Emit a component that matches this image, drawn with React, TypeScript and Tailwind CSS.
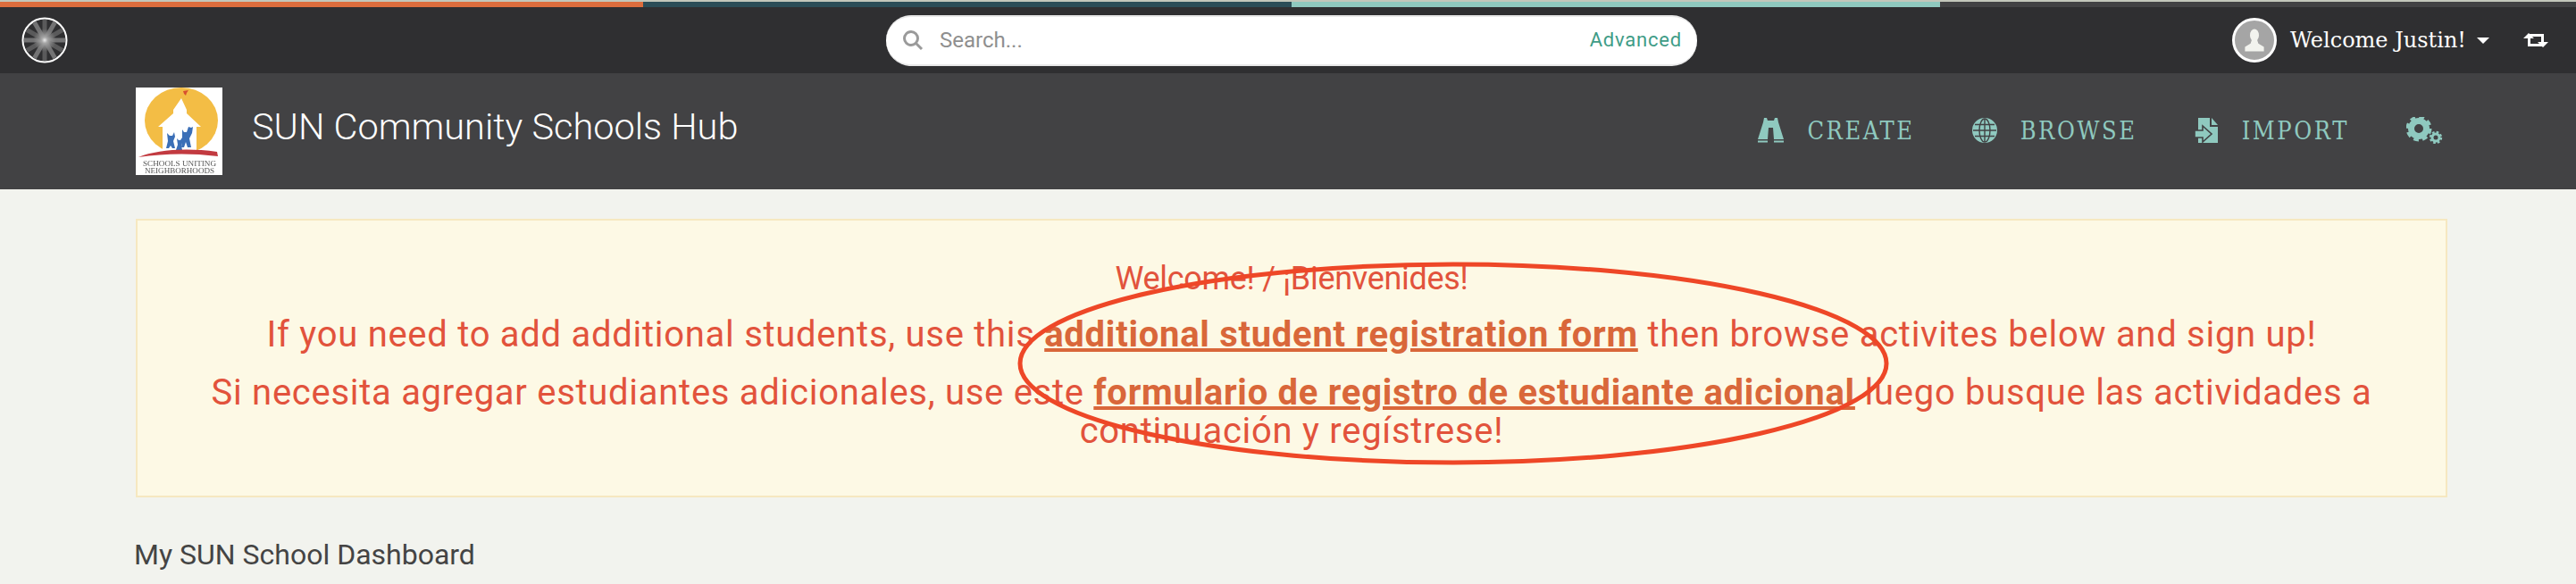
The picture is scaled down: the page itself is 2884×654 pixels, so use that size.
import React from 'react';

const slab = 'font-["DejaVu_Serif","Liberation_Serif",serif]';

const Wheel = () => (
  <svg viewBox="0 0 52 52" className="w-[52px] h-[52px]">
    <defs>
      <radialGradient id="hub">
        <stop offset="0" stopColor="#ececec" />
        <stop offset="0.25" stopColor="#a8a8a8" />
        <stop offset="1" stopColor="#8a8a8a" stopOpacity="0" />
      </radialGradient>
    </defs>
    <circle cx="26" cy="26" r="24.5" fill="#2f2f31" stroke="#fff" strokeWidth="2" />
    {[0, 30, 60, 90, 120, 150].map((a) => (
      <rect key={a} x="23.5" y="3" width="5" height="46" fill={a % 60 === 0 ? '#5a5a5b' : '#737374'} transform={`rotate(${a} 26 26)`} />
    ))}
    <circle cx="26" cy="26" r="13" fill="url(#hub)" />
  </svg>
);

const SunLogo = () => (
  <svg viewBox="0 0 97 98" className="w-[97px] h-[98px] bg-white shrink-0 blur-[0.5px]">
    <ellipse cx="51" cy="37" rx="41" ry="37" fill="#f3bd45" />
    <path d="M51 12l6 13v4l16 15h-5v28H30V44h-5l17-15v-4z" fill="#fff" />
    <path d="M53 4l6-1-2 3-1 3-2-2z" fill="#d8502f" />
    <path d="M52 47l2 3h3l2-6 3 1 2-1-1 7-3 6 2 10h-4l-2-6-2 6h-3l1-10z" fill="#3b6fb7" />
    <path d="M35 51l3 3h3l2-4 1 5-2 5 2 8h-3l-2-3-2 3h-3l2-8z" fill="#3b6fb7" />
    <path d="M46 57l2 2h2l2-3 0 6-1 3 1 5h-7l2-6z" fill="#3b6fb7" />
    <path d="M3 78c20-8 52-11 88-6l1 5c-33-4-61-3-89 1z" fill="#c23a40" />
    <text x="8" y="88" fontSize="8" textLength="82" lengthAdjust="spacingAndGlyphs" fill="#555" fontFamily="Liberation Serif, serif">SCHOOLS UNITING</text>
    <text x="10" y="96" fontSize="8" textLength="78" lengthAdjust="spacingAndGlyphs" fill="#555" fontFamily="Liberation Serif, serif">NEIGHBORHOODS</text>
  </svg>
);

const Binoculars = () => (
  <svg viewBox="0 0 29 28" className="w-[29px] h-[28px]" fill="#8fc9bf">
    <path d="M7 0h3l1 3h7l1-3h3l1 5 6 19H18l-1-13h-5l-1 13H0L6 5z" />
    <rect x="0" y="25.5" width="11" height="2" />
    <rect x="18" y="25.5" width="11" height="2" />
  </svg>
);

const Globe = () => (
  <svg viewBox="0 0 28 28" className="w-[28px] h-[28px]" fill="none" stroke="#8fc9bf" strokeWidth="2">
    <circle cx="14" cy="14" r="13" fill="#8fc9bf" />
    <ellipse cx="14" cy="14" rx="6" ry="13" stroke="#424244" strokeWidth="1.4" />
    <path d="M14 1v26M1 14h26M3 7.5h22M3 20.5h22" stroke="#424244" strokeWidth="1.4" />
  </svg>
);

const ImportIcon = () => (
  <svg viewBox="0 0 27 28" className="w-[27px] h-[28px]">
    <path d="M4 0h13v10h9v18H4z" fill="#8fc9bf" />
    <path d="M19 0l7 8h-7z" fill="#8fc9bf" />
    <path d="M0 14h9V9l10 9-10 9v-5H0z" fill="#8fc9bf" stroke="#424244" strokeWidth="1.6" />
  </svg>
);

const Cogs = () => (
  <svg viewBox="0 0 41 30" className="w-[41px] h-[30px]" fill="none" stroke="#8fc9bf">
    <circle cx="14" cy="13" r="8.5" strokeWidth="7" />
    <circle cx="14" cy="13" r="12" strokeWidth="5" strokeDasharray="5.4 4" />
    <circle cx="33" cy="23" r="4" strokeWidth="3" />
    <circle cx="33" cy="23" r="6" strokeWidth="2.4" strokeDasharray="2.6 2.1" />
  </svg>
);

const NavItem = ({ icon, label }: { icon: React.ReactNode; label: string }) => (
  <div className="flex items-center gap-[26px]">
    {icon}
    <span className={`${slab} font-stretch-condensed text-[27px] leading-none tracking-[2.6px] text-[#8fc9bf]`}>{label}</span>
  </div>
);

export default function App() {
  return (
    <div className="h-[654px] overflow-hidden bg-[#f2f3ee] font-['Roboto',sans-serif]">
      <div className="h-[2px] bg-[#c3c7bb]" />
      <div className="flex h-[6px]">
        <div className="w-[720px] bg-[#dc6d3d]" />
        <div className="w-[726px] bg-[#2b4d57]" />
        <div className="w-[726px] bg-[#8fc9bf]" />
        <div className="flex-1 bg-[#424244]" />
      </div>

      {/* Top bar */}
      <header className="h-[74px] bg-[#2f2f31] flex items-center pl-6 pr-[31px]">
        <div className="w-[968px] flex items-center">
          <Wheel />
        </div>
        <div className="w-[908px] h-[57px] rounded-[28px] bg-white flex items-center pl-[18px] pr-[17px] border-y-2 border-[#e8e8e8]">
          <svg viewBox="0 0 24 24" className="w-[24px] h-[24px] mr-[18px]" fill="none" stroke="#9a9a9a" strokeWidth="3">
            <circle cx="10" cy="10" r="7.5" />
            <path d="M15.5 15.5L22 22" />
          </svg>
          <span className="text-[24px] text-[#8f8f8f] flex-1">Search...</span>
          <span className="mb-[2px] text-[22px] tracking-[0.8px] text-[#3f9c87]">Advanced</span>
        </div>
        <div className="flex-1 flex items-center justify-end">
          <div className="w-[50px] h-[50px] rounded-full bg-[#a5a5a5] border-[3px] border-white flex items-center justify-center overflow-hidden">
            <svg viewBox="0 0 24 24" className="w-[30px] h-[30px]" fill="#f2f3ee">
              <ellipse cx="12" cy="7.5" rx="4" ry="5.5" />
              <path d="M9.5 12h5l1 3 5 3v4H3.5v-4l5-3z" />
            </svg>
          </div>
          <span className={`${slab} ml-[15px] text-[24px] text-white`}>Welcome Justin!</span>
          <div className="ml-3 w-0 h-0 border-x-[7px] border-x-transparent border-t-[7px] border-t-white" />
          <svg viewBox="0 0 28 16" className="ml-[38px] w-[28px] h-[16px]" fill="#fff">
            <path d="M6 0l6 6H8v6h10l3 3H5V6H0zM22 16l-6-6h4V4H10L7 1h16v9h5z" />
          </svg>
        </div>
      </header>

      {/* Site header */}
      <div className="h-[130px] bg-[#424244] flex items-center pl-[152px] pr-[149px]">
        <SunLogo />
        <h1 className="ml-[33px] mb-[10px] text-[41.5px] font-light text-white">SUN Community Schools Hub</h1>
        <nav className="ml-auto mb-[2px] flex items-center gap-[64px]">
          <NavItem icon={<Binoculars />} label="CREATE" />
          <NavItem icon={<Globe />} label="BROWSE" />
          <NavItem icon={<ImportIcon />} label="IMPORT" />
          <Cogs />
        </nav>
      </div>

      {/* Alert */}
      <div className="relative ml-[152px] mr-[144px] mt-[33px] h-[312px] bg-[#fdf9e5] border-2 border-[#f6e8c0] flex flex-col items-center pt-[40px] px-[60px] text-center text-[#e2533c]">
        <p className="text-[36px] leading-[50px] tracking-[-0.3px]">Welcome! / ¡Bienvenides!</p>
        <p className="text-[40px] leading-[44px] mt-[16px] tracking-[0.72px]">
          If you need to add additional students, use this <a className="font-bold underline text-[#d9673a]">additional student registration form</a> then browse activites below and sign up!
        </p>
        <p className="text-[40px] leading-[43px] mt-[21px] tracking-[0.72px]">
          Si necesita agregar estudiantes adicionales, use este <a className="font-bold underline text-[#d9673a]">formulario de registro de estudiante adicional</a> luego busque las actividades a continuación y regístrese!
        </p>
        <svg viewBox="0 0 976 228" className="absolute left-[985px] top-[46px] w-[976px] h-[228px] pointer-events-none" fill="none">
          <ellipse cx="488" cy="114" rx="485" ry="111" stroke="#ee4727" strokeWidth="5" />
        </svg>
      </div>

      <h2 className="ml-[150px] mt-[40px] text-[32px] text-[#444]">My SUN School Dashboard</h2>
    </div>
  );
}
